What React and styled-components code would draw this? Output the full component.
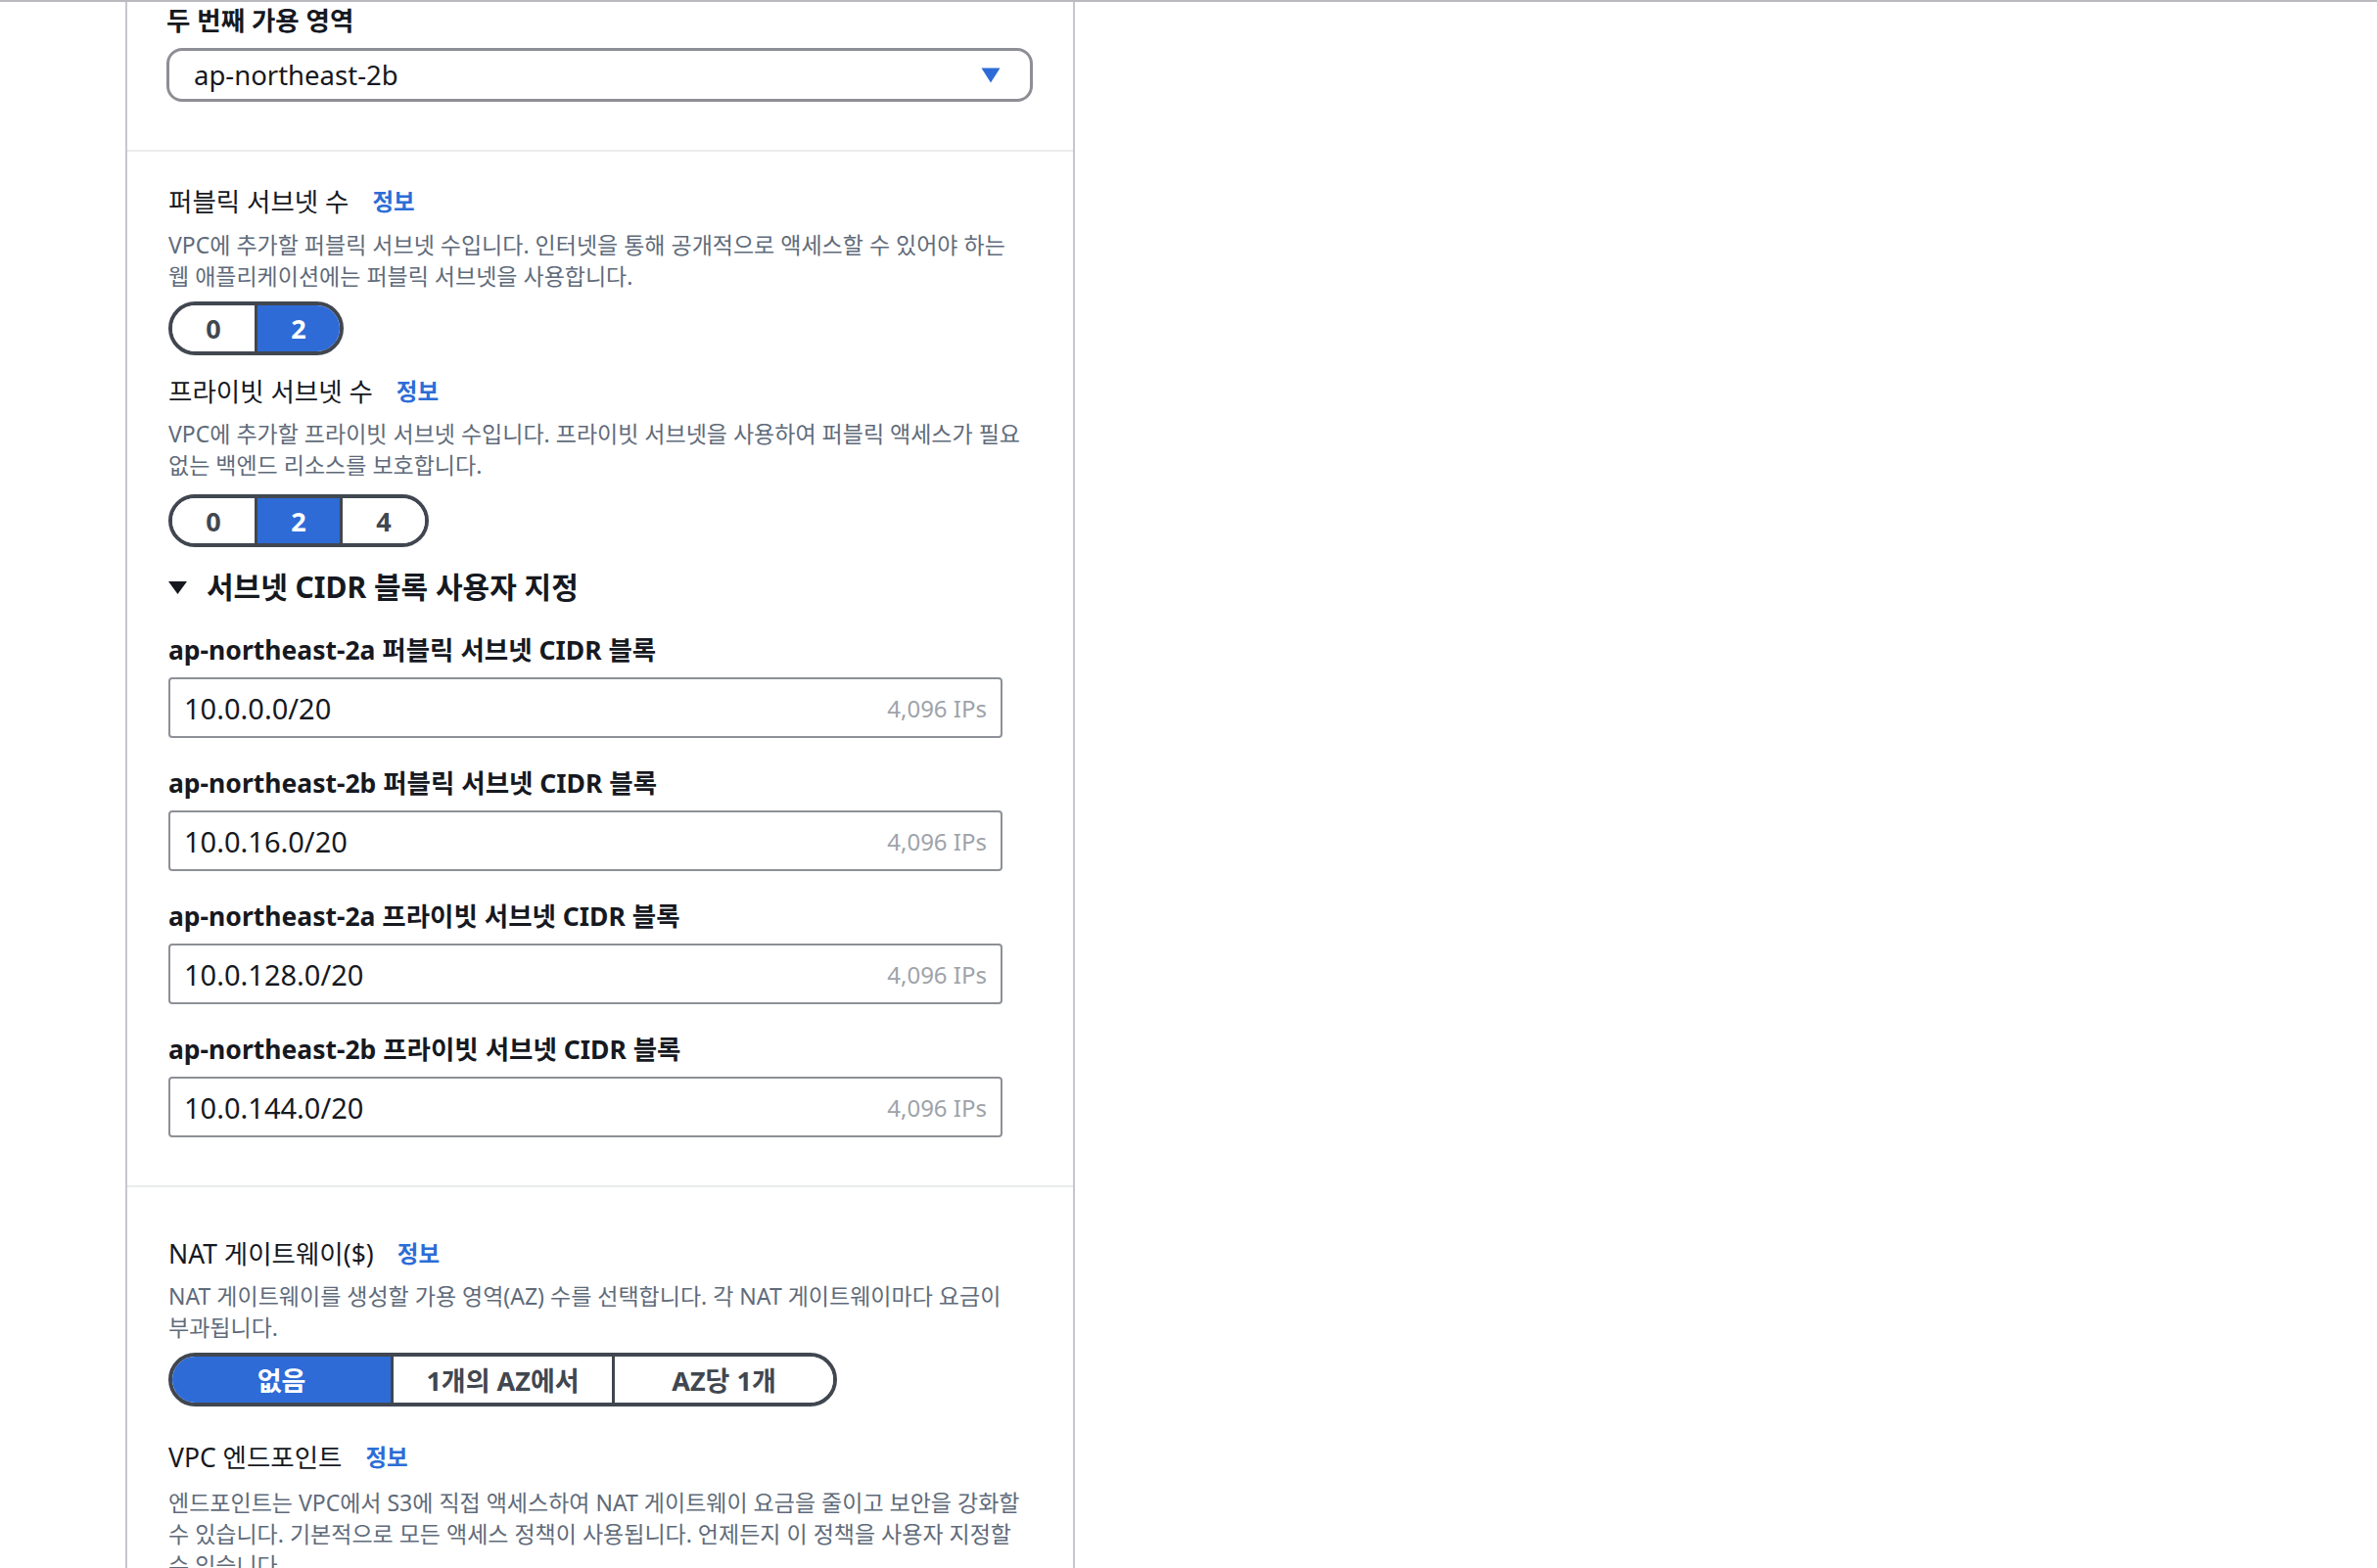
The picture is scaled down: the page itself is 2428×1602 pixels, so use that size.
import React from 'react';
import styled, { createGlobalStyle } from 'styled-components';

const GlobalStyle = createGlobalStyle`
  html, body {
    margin: 0;
    padding: 0;
    overflow: hidden;
    background: #ffffff;
  }

  body {
    font-family: "Noto Sans", "Noto Sans CJK KR", sans-serif;
    color: #16191f;
  }
`;

const Page = styled.div`
  display: flex;
  height: 1602px;
  padding-left: 128px;
  border-top: 2px solid #b9b9be;
  box-sizing: border-box;
`;

const Panel = styled.div`
  width: 970px;
  border-left: 2px solid #c6c6cd;
  border-right: 2px solid #c6c6cd;
  box-sizing: border-box;
`;

const Section = styled.section`
  display: flex;
  flex-direction: column;
  padding: ${(p) => p.$pad};
  border-bottom: ${(p) => (p.$divider ? '2px solid #e9ebed' : 'none')};
`;

const StrongLabel = styled.div`
  font-size: 26.5px;
  font-weight: 700;
  line-height: 36px;
  margin-top: ${(p) => p.$mt || 0}px;
`;

const FieldLabel = styled.div`
  display: flex;
  align-items: center;
  font-size: 26.5px;
  line-height: 34px;
  margin-top: ${(p) => p.$mt || 0}px;
`;

const InfoLink = styled.a`
  margin-left: 24px;
  font-size: 23.5px;
  font-weight: 700;
  color: #2c6dd6;
  text-decoration: none;
  cursor: pointer;
`;

const Description = styled.p`
  margin: ${(p) => p.$mt || 0}px 0 0;
  max-width: 875px;
  font-size: 23px;
  line-height: 32px;
  color: #5f6b7a;
  word-break: keep-all;
`;

const Select = styled.div`
  display: flex;
  align-items: center;
  justify-content: space-between;
  height: 55px;
  margin-top: 10px;
  padding: 0 30px 0 25px;
  border: 3px solid #8e8e95;
  border-radius: 16px;
  box-sizing: border-box;
  font-size: 27.5px;
  cursor: pointer;
`;

const SegGroup = styled.div`
  display: flex;
  align-self: flex-start;
  height: ${(p) => p.$h || 55}px;
  margin-top: ${(p) => p.$mt || 0}px;
  border: 4px solid #414750;
  border-radius: 30px;
  overflow: hidden;
  box-sizing: border-box;
`;

const SegButton = styled.div`
  display: flex;
  align-items: center;
  justify-content: center;
  width: ${(p) => p.$w}px;
  font-size: 27px;
  font-weight: 700;
  color: ${(p) => (p.$active ? '#ffffff' : '#414750')};
  background: ${(p) => (p.$active ? '#2e6bd7' : '#ffffff')};
  cursor: pointer;

  & + & {
    border-left: 3px solid #414750;
  }
`;

const ExpandHeader = styled.div`
  display: flex;
  align-items: center;
  gap: 20px;
  margin-top: 21px;
  font-size: 30px;
  font-weight: 700;
  line-height: 40px;
  cursor: pointer;
`;

const CidrField = styled.div`
  display: flex;
  flex-direction: column;
  margin-top: ${(p) => p.$mt}px;
`;

const InputBox = styled.div`
  display: flex;
  align-items: center;
  width: 852px;
  height: 62px;
  margin-top: 10px;
  padding: 0 14px;
  border: 2px solid #8d9096;
  border-radius: 4px;
  box-sizing: border-box;
`;

const Input = styled.input`
  flex: 1;
  min-width: 0;
  border: none;
  outline: none;
  padding: 0;
  background: transparent;
  font-family: inherit;
  font-size: 29px;
  color: #16191f;
`;

const Hint = styled.span`
  font-size: 24px;
  color: #9ea3aa;
`;

function Caret() {
  return (
    <svg width='20' height='16' viewBox='0 0 20 16'>
      <path d='M0.5 0.5 H19.5 L10 15.5 Z' fill='#2e6bd7' />
    </svg>
  );
}

function ExpandTriangle() {
  return (
    <svg width='19' height='13' viewBox='0 0 19 13'>
      <path d='M0 0 H19 L9.5 13 Z' fill='#16191f' />
    </svg>
  );
}

function Segmented({ options, active, width, mt, h }) {
  return (
    <SegGroup $mt={mt} $h={h}>
      {options.map((o) => (
        <SegButton key={o} $w={width} $active={o === active}>
          {o}
        </SegButton>
      ))}
    </SegGroup>
  );
}

const cidrBlocks = [
  { label: 'ap-northeast-2a 퍼블릭 서브넷 CIDR 블록', value: '10.0.0.0/20' },
  { label: 'ap-northeast-2b 퍼블릭 서브넷 CIDR 블록', value: '10.0.16.0/20' },
  { label: 'ap-northeast-2a 프라이빗 서브넷 CIDR 블록', value: '10.0.128.0/20' },
  { label: 'ap-northeast-2b 프라이빗 서브넷 CIDR 블록', value: '10.0.144.0/20' },
];

export default function App() {
  return (
    <>
      <GlobalStyle />
      <Page>
        <Panel>
          <Section $pad='1px 41px 49px 40px' $divider>
            <StrongLabel>두 번째 가용 영역</StrongLabel>
            <Select>
              <span>ap-northeast-2b</span>
              <Caret />
            </Select>
          </Section>

          <Section $pad='34px 41px 49px 42px' $divider>
            <FieldLabel>
              퍼블릭 서브넷 수<InfoLink>정보</InfoLink>
            </FieldLabel>
            <Description $mt={11}>
              VPC에 추가할 퍼블릭 서브넷 수입니다. 인터넷을 통해 공개적으로 액세스할 수 있어야 하는 웹 애플리케이션에는 퍼블릭 서브넷을 사용합니다.
            </Description>
            <Segmented options={['0', '2']} active='2' width={84} mt={10} />

            <FieldLabel $mt={20}>
              프라이빗 서브넷 수<InfoLink>정보</InfoLink>
            </FieldLabel>
            <Description $mt={10}>
              VPC에 추가할 프라이빗 서브넷 수입니다. 프라이빗 서브넷을 사용하여 퍼블릭 액세스가 필요 없는 백엔드 리소스를 보호합니다.
            </Description>
            <Segmented options={['0', '2', '4']} active='2' width={84} mt={14} h={54} />

            <ExpandHeader>
              <ExpandTriangle />
              서브넷 CIDR 블록 사용자 지정
            </ExpandHeader>

            {cidrBlocks.map((b, i) => (
              <CidrField key={b.label} $mt={i === 0 ? 26 : 28}>
                <StrongLabel>{b.label}</StrongLabel>
                <InputBox>
                  <Input defaultValue={b.value} />
                  <Hint>4,096 IPs</Hint>
                </InputBox>
              </CidrField>
            ))}
          </Section>

          <Section $pad='51px 41px 0 42px'>
            <FieldLabel>
              NAT 게이트웨이($)<InfoLink>정보</InfoLink>
            </FieldLabel>
            <Description $mt={10}>
              NAT 게이트웨이를 생성할 가용 영역(AZ) 수를 선택합니다. 각 NAT 게이트웨이마다 요금이 부과됩니다.
            </Description>
            <Segmented options={['없음', '1개의 AZ에서', 'AZ당 1개']} active='없음' width={223} mt={10} />

            <FieldLabel $mt={35}>
              VPC 엔드포인트<InfoLink>정보</InfoLink>
            </FieldLabel>
            <Description $mt={13}>
              엔드포인트는 VPC에서 S3에 직접 액세스하여 NAT 게이트웨이 요금을 줄이고 보안을 강화할 수 있습니다. 기본적으로 모든 액세스 정책이 사용됩니다. 언제든지 이 정책을 사용자 지정할 수 있습니다.
            </Description>
          </Section>
        </Panel>
      </Page>
    </>
  );
}
